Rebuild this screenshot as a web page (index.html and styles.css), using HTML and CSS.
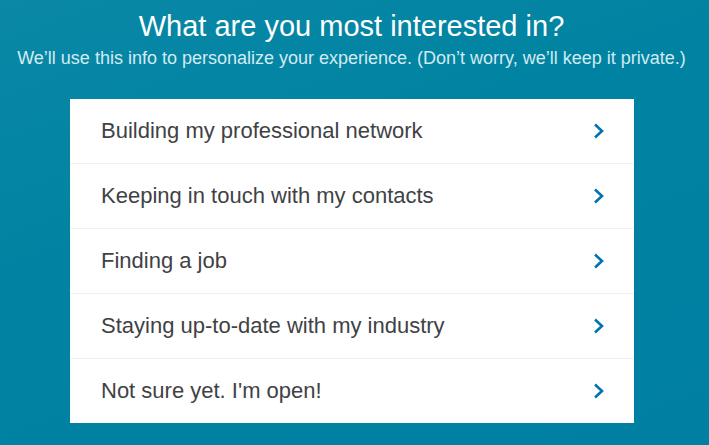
FILE: index.html
```html
<!DOCTYPE html>
<html lang="en">

<head>
    <meta charset="UTF-8">
    <title>Onboarding - Interests</title>
    <link rel="stylesheet" href="styles.css">
</head>

<body>
    <div class="intro">
        <h1>What are you most interested in?</h1>
        <p>We’ll use this info to personalize your experience. (Don’t worry, we’ll keep it private.)</p>
    </div>
    <ul class="choices">
        <li class="choice">
            <span>Building my professional network</span>
            <svg class="chevron" viewBox="0 0 12 16"><path d="M2 1.5 L9 8 L2 14.5" /></svg>
        </li>
        <li class="choice">
            <span>Keeping in touch with my contacts</span>
            <svg class="chevron" viewBox="0 0 12 16"><path d="M2 1.5 L9 8 L2 14.5" /></svg>
        </li>
        <li class="choice">
            <span>Finding a job</span>
            <svg class="chevron" viewBox="0 0 12 16"><path d="M2 1.5 L9 8 L2 14.5" /></svg>
        </li>
        <li class="choice">
            <span>Staying up-to-date with my industry</span>
            <svg class="chevron" viewBox="0 0 12 16"><path d="M2 1.5 L9 8 L2 14.5" /></svg>
        </li>
        <li class="choice">
            <span>Not sure yet. I'm open!</span>
            <svg class="chevron" viewBox="0 0 12 16"><path d="M2 1.5 L9 8 L2 14.5" /></svg>
        </li>
    </ul>
</body>

</html>
```

FILE: styles.css
```css
body {
    margin: 0;
    height: 445px;
    overflow: hidden;
    font-family: "Liberation Sans", Arial, sans-serif;
    background: linear-gradient(160deg, #0a88a6 0%, #0083a2 40%, #007fa2 100%);
    display: flex;
    flex-direction: column;
    align-items: center;
}

.intro {
    text-align: center;
    padding-top: 8px;
    margin-left: -6px;
}

h1 {
    margin: 0;
    font-size: 29px;
    font-weight: normal;
    color: white;
    line-height: 36px;
}

.intro p {
    margin: 3px 0 0 0;
    font-size: 18px;
    color: #d2ebf2;
    line-height: 22px;
}

.choices {
    list-style: none;
    margin: 30px 0 0 0;
    padding: 0;
    width: 564px;
    align-self: flex-start;
    margin-left: 70px;
    background-color: white;
}

.choice {
    height: 64px;
    padding: 0 29px 0 31px;
    display: flex;
    align-items: center;
    justify-content: space-between;
    font-size: 22px;
    color: #3f4245;
    border-bottom: 1px solid #eef0f1;
}

.choice:last-child {
    border-bottom: none;
}

.chevron {
    width: 12px;
    height: 16px;
}

.chevron path {
    fill: none;
    stroke: #0073b1;
    stroke-width: 2.6;
}
```
